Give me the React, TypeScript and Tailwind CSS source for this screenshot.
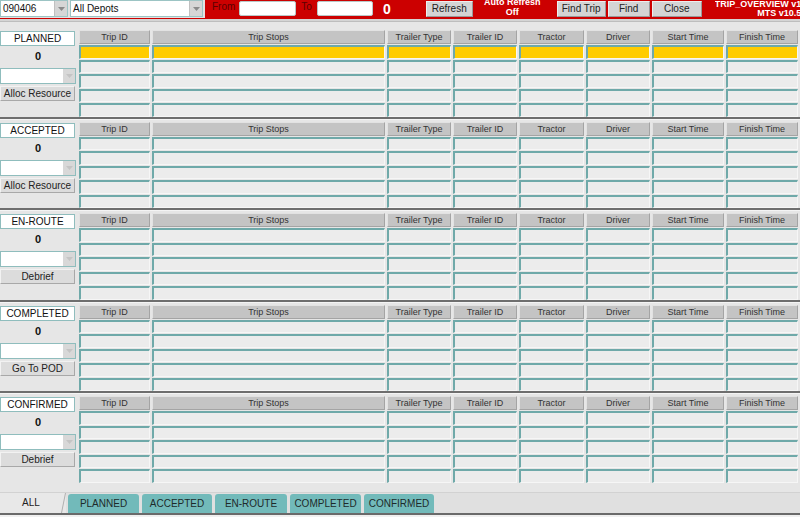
import React from "react";

const COLS = ["Trip ID", "Trip Stops", "Trailer Type", "Trailer ID", "Tractor", "Driver", "Start Time", "Finish Time"];

const SECTIONS = [
  { name: "PLANNED", action: "Alloc Resource", yellow: true },
  { name: "ACCEPTED", action: "Alloc Resource", yellow: false },
  { name: "EN-ROUTE", action: "Debrief", yellow: false },
  { name: "COMPLETED", action: "Go To POD", yellow: false },
  { name: "CONFIRMED", action: "Debrief", yellow: false },
];

const TABS = [
  { t: "PLANNED", w: "w-[71px]" },
  { t: "ACCEPTED", w: "w-[70px]" },
  { t: "EN-ROUTE", w: "w-[72px]" },
  { t: "COMPLETED", w: "w-[71px]" },
  { t: "CONFIRMED", w: "w-[70px]" },
];

function Arrow() {
  return (
    <svg width="7" height="4" viewBox="0 0 7 4">
      <path d="M0 0 L7 0 L3.5 4 Z" fill="#8a8a8a" />
    </svg>
  );
}

function Combo({ text, w, bw }: { text: string; w: string; bw?: string }) {
  return (
    <div className={`${w} h-[17px] bg-white border border-[#9cc4c4] flex items-stretch shrink-0`}>
      <div className="flex-1 text-[10px] leading-[15px] pl-[2px] text-[#111] whitespace-nowrap overflow-hidden">{text}</div>
      <div className={`${bw ?? "w-[12px]"} bg-[#d6d6d6] border-l border-[#c0c0c0] flex items-center justify-center`}>
        <Arrow />
      </div>
    </div>
  );
}

function TopButton({ label, w }: { label: string; w: string }) {
  return (
    <div className={`${w} h-[16px] mt-[1px] bg-[#d4d4d4] border border-[#9a9a9a] border-t-[#eeeeee] border-l-[#eeeeee] text-[10px] leading-[14px] text-center text-[#222] shrink-0`}>
      {label}
    </div>
  );
}

function Section({ name, action, yellow }: { name: string; action: string; yellow: boolean }) {
  const rows = [0, 1, 2, 3, 4];
  return (
    <div className="flex h-[86.5px]">
      <div className="w-[76px] mr-[3px] flex flex-col shrink-0">
        <div className="mt-[1px] h-[15px] w-[75px] bg-white border border-[#8fbdbd] text-[10px] leading-[13px] text-center text-[#111]">
          {name}
        </div>
        <div className="h-[21px] flex items-center justify-center text-[11px] font-bold text-[#111]">0</div>
        <div className="mt-[1px] h-[16px] w-[76px] bg-white border border-[#8fbdbd] flex justify-end">
          <div className="w-[12px] bg-[#d8d8d8] flex items-center justify-center">
            <svg width="7" height="4" viewBox="0 0 7 4">
              <path d="M0 0 L7 0 L3.5 4 Z" fill="#c4c4c4" />
            </svg>
          </div>
        </div>
        <div className="mt-[2px] h-[15px] w-[75px] bg-[#dcdcdc] border border-[#a8a8a8] border-t-[#f2f2f2] border-l-[#f2f2f2] text-[10px] leading-[13px] text-center text-[#222]">
          {action}
        </div>
      </div>
      <div className="grid grid-cols-[71px_233px_64px_64px_65px_64px_72px_72px] grid-rows-[14px_repeat(5,1fr)] gap-x-[2px] gap-y-[1px] h-[86.5px]">
        {COLS.map((c) => (
          <div
            key={c}
            className="bg-[#c4c4c4] border-t border-l border-[#e2e2e2] border-b border-r border-b-[#a4a4a4] border-r-[#a4a4a4] text-[9px] leading-[12px] text-center text-[#333] whitespace-nowrap overflow-hidden"
          >
            {c}
          </div>
        ))}
        {rows.map((r) =>
          COLS.map((c) => (
            <div
              key={`${r}-${c}`}
              className={`${yellow && r === 0 ? "bg-[#ffcc00]" : "bg-[#ececec]"} border-t-2 border-l-2 border-[#6fa9a9] border-r border-b border-r-[#f6f6f6] border-b-[#f6f6f6]`}
            />
          ))
        )}
      </div>
    </div>
  );
}

function Separator() {
  return (
    <div className="pb-[2px]">
      <div className="h-[2px] bg-[#6e6e6e]" />
      <div className="h-[1px] bg-[#f4f4f4]" />
    </div>
  );
}

export default function App() {
  return (
    <div
      className="w-[800px] h-[517px] bg-[#e6e6e6] overflow-hidden flex flex-col"
      style={{ fontFamily: '"Liberation Sans", Arial, sans-serif' }}
    >
      {/* top bar */}
      <div className="h-[19px] flex border-b border-[#cc0000] shrink-0">
        <div className="w-[205px] bg-[#e2e2e2] flex gap-[2px] shrink-0">
          <Combo text="090406" w="w-[68px]" bw="w-[13px]" />
          <Combo text="All Depots" w="w-[133px]" bw="w-[13px]" />
        </div>
        <div className="flex-1 bg-[#cc0000] flex items-start overflow-hidden">
          <div className="ml-[7px] text-[10px] leading-[14px] text-[#5c0000] shrink-0">From</div>
          <div className="ml-[4px] mt-[1px] w-[57px] h-[15px] bg-white rounded-[2px] border border-[#b9c8c8] shrink-0" />
          <div className="ml-[5px] text-[10px] leading-[14px] text-[#5c0000] shrink-0">To</div>
          <div className="ml-[5px] mt-[1px] w-[56px] h-[15px] bg-white rounded-[2px] border border-[#b9c8c8] shrink-0" />
          <div className="ml-[10px] text-[14px] leading-[18px] font-bold text-white shrink-0">0</div>
          <div className="ml-[35px]">
            <TopButton label="Refresh" w="w-[47px]" />
          </div>
          <div className="ml-[6px] w-[67px] text-center text-[9px] font-bold text-white leading-[10px] -mt-[3px] shrink-0">
            <div>Auto Refresh</div>
            <div>Off</div>
          </div>
          <div className="ml-[11px] flex gap-[2px]">
            <TopButton label="Find Trip" w="w-[49px]" />
            <TopButton label="Find" w="w-[42px]" />
            <TopButton label="Close" w="w-[50px]" />
          </div>
          <div className="ml-[13px] flex-1 overflow-hidden">
            <div className="w-[94px] text-right text-[9px] font-bold text-white leading-[9px] whitespace-nowrap">
              <div>TRIP_OVERVIEW v1.0</div>
              <div>MTS v10.5.0</div>
            </div>
          </div>
        </div>
      </div>
      <div className="h-[3px] bg-[#d4d4d4] border-b border-[#bdbdbd] shrink-0" />

      {/* sections */}
      <div className="pt-[8px] flex flex-col">
        {SECTIONS.map((s, i) => (
          <React.Fragment key={s.name}>
            {i > 0 && <Separator />}
            <Section {...s} />
          </React.Fragment>
        ))}
      </div>

      {/* tab bar */}
      <div className="mt-[9px] border-t border-[#d2d2d2] bg-[#e0e0e0] h-[21px] flex items-end shrink-0">
        <div className="relative w-[66px] h-[20px] bg-[#e8e8e8] text-[10px] leading-[20px] text-center text-[#222] pr-[4px]">
          ALL
          <svg className="absolute right-0 top-0" width="5" height="20" viewBox="0 0 5 20">
            <path d="M4.5 0 L0.5 20" stroke="#b0b0b0" strokeWidth="1" fill="none" />
          </svg>
        </div>
        <div className="ml-[2px] flex gap-[3px]">
          {TABS.map(({ t, w }) => (
            <div
              key={t}
              className={`${w} h-[19px] bg-[#72baba] rounded-t-[3px] text-[10px] leading-[19px] text-center text-[#1e2a2a]`}
            >
              {t}
            </div>
          ))}
        </div>
      </div>
      <div className="h-[2px] bg-[#6a6a6a] shrink-0" />
      <div className="flex-1 bg-[#f0f0f0]" />
    </div>
  );
}
